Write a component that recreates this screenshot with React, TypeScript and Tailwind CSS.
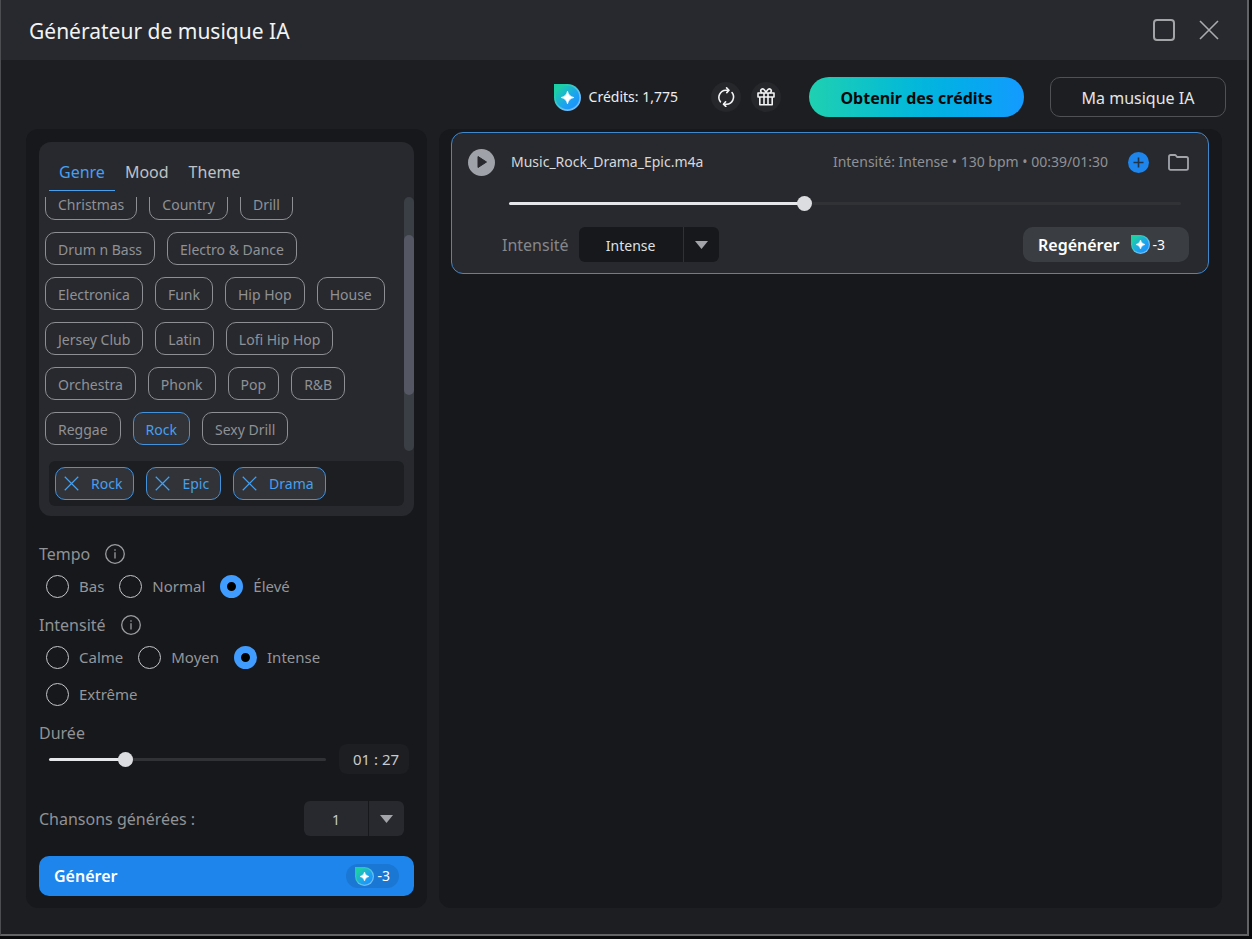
import { useState } from "react";
import type { ReactNode } from "react";

const genres = [
  "Christmas", "Country", "Drill", "Drum n Bass", "Electro & Dance", "Electronica",
  "Funk", "Hip Hop", "House", "Jersey Club", "Latin", "Lofi Hip Hop", "Orchestra",
  "Phonk", "Pop", "R&B", "Reggae", "Rock", "Sexy Drill",
];

const tabs = ["Genre", "Mood", "Theme"];
const tempos = ["Bas", "Normal", "Élevé"];
const intensities = ["Calme", "Moyen", "Intense", "Extrême"];

function CreditIcon({ className }: { className: string }) {
  return (
    <svg className={className} viewBox="0 0 27 27" aria-hidden="true">
      <defs>
        <linearGradient id="credit" x1="0" y1="0" x2="1" y2="1">
          <stop offset="0.1" stopColor="#1ccfa6" />
          <stop offset="0.6" stopColor="#1ba2f2" />
          <stop offset="1" stopColor="#1b8cff" />
        </linearGradient>
        <linearGradient id="creditRing" x1="0" y1="0" x2="1" y2="1">
          <stop offset="0.2" stopColor="#1ccfa6" />
          <stop offset="0.7" stopColor="#6fbcf8" />
        </linearGradient>
      </defs>
      <path d="M0 0H13.5A13.5 13.5 0 1 1 0 13.5Z" fill="url(#creditRing)" />
      <circle cx="13.5" cy="13.5" r="11.8" fill="url(#credit)" />
      <path d="M13.5 7.2Q14.6 12.4 19.8 13.5Q14.6 14.6 13.5 19.8Q12.4 14.6 7.2 13.5Q12.4 12.4 13.5 7.2Z" fill="#fff" stroke="#fff" strokeWidth="0.8" strokeLinejoin="round" />
    </svg>
  );
}

function InfoIcon() {
  return (
    <svg className="size-5" viewBox="0 0 20 20" fill="none" stroke="#9b9da1" strokeWidth="1.3" aria-hidden="true">
      <circle cx="10" cy="10" r="9.3" />
      <path d="M10 8.3V14.5" />
      <path d="M10 5.2V6.7" />
    </svg>
  );
}

function RefreshIcon() {
  return (
    <svg className="size-5" viewBox="0 0 20 20" fill="none" stroke="#f2f3f4" strokeWidth="1.6" strokeLinecap="round" strokeLinejoin="round" aria-hidden="true">
      <path d="M4.4 14.8A7.2 7.2 0 0 1 9.8 3.2H12.6" />
      <path d="M10.6 0.9L12.9 3.2L10.8 5.6" />
      <path d="M16 5.6A7.2 7.2 0 0 1 10.6 17.2H7.8" />
      <path d="M9.6 14.8L7.5 17.2L9.8 19.4" />
    </svg>
  );
}

function GiftIcon() {
  return (
    <svg className="size-5" viewBox="0 0 20 20" fill="none" stroke="#f2f3f4" strokeWidth="1.6" strokeLinejoin="round" aria-hidden="true">
      <path d="M2 6H18V10H2Z" />
      <path d="M3.8 10V17.8H16.2V10" />
      <path d="M8 6V17.8M12 6V17.8" />
      <path d="M10 5.8C8.8 2.2 7 1.4 5.6 2.2C4 3.2 4.6 5.4 6.4 5.9M10 5.8C11.2 2.2 13 1.4 14.4 2.2C16 3.2 15.4 5.4 13.6 5.9" />
    </svg>
  );
}

function CrossIcon({ className }: { className: string }) {
  return (
    <svg className={className} viewBox="0 0 20 20" fill="none" stroke="currentColor" strokeWidth="1.6" aria-hidden="true">
      <path d="M1 1L19 19M19 1L1 19" />
    </svg>
  );
}

function Slider({ label, value, max, onChange }: { label: string; value: number; max: number; onChange: (v: number) => void }) {
  const pct = (value / max) * 100;
  return (
    <input
      type="range"
      aria-label={label}
      min={0}
      max={max}
      step={0.5}
      value={value}
      onChange={(e) => onChange(Number(e.target.value))}
      className="h-[3px] w-full min-w-0 flex-1 cursor-pointer appearance-none rounded-sm [&::-webkit-slider-thumb]:size-[15px] [&::-webkit-slider-thumb]:appearance-none [&::-webkit-slider-thumb]:rounded-full [&::-webkit-slider-thumb]:bg-[#dcdde1]"
      style={{ background: `linear-gradient(to right, #e6e7ea ${pct}%, #313236 ${pct}%)` }}
    />
  );
}

function Dropdown({ id, options, value, onChange, dark }: { id: string; options: string[]; value: string; onChange: (v: string) => void; dark?: boolean }) {
  return (
    <div className={dark ? "relative w-[140px]" : "relative w-[100px]"}>
      <select
        id={id}
        value={value}
        onChange={(e) => onChange(e.target.value)}
        className={`h-[35px] w-full appearance-none rounded-md pt-0.5 pr-9 text-center text-sm [text-align-last:center] ${dark ? "bg-[#17181b] text-[#dfe1e3]" : "bg-[#28292e] text-[#c9cbce]"}`}
      >
        {options.map((o) => (
          <option key={o}>{o}</option>
        ))}
      </select>
      <span className={`pointer-events-none absolute inset-y-0 right-0 flex w-9 items-center justify-center border-l ${dark ? "border-[#303136]" : "border-[#17181b]"}`}>
        <svg className="h-2 w-[13px]" viewBox="0 0 13 8" fill="#a2a4aa" aria-hidden="true">
          <path d="M0 0H13L6.5 8Z" />
        </svg>
      </span>
    </div>
  );
}

function RadioGroup({ name, options, value, onChange }: { name: string; options: string[]; value: string; onChange: (v: string) => void }) {
  return (
    <div role="radiogroup" aria-label={name} className="mt-[9px] flex flex-wrap gap-x-[15px] gap-y-[14px] pl-[7px]">
      {options.map((o) => (
        <label key={o} className="flex h-[23px] items-center gap-[10px] text-[15px] text-[#94969a]">
          <input
            type="radio"
            name={name}
            checked={value === o}
            onChange={() => onChange(o)}
            className="size-[23px] appearance-none rounded-full border border-[#c4c6c9] checked:border-[7px] checked:border-[#409cff] checked:bg-black"
          />
          {o}
        </label>
      ))}
    </div>
  );
}

function SectionLabel({ children }: { children: ReactNode }) {
  return (
    <div className="flex h-6 items-center gap-[15px] text-base text-[#909296]">
      {children}
      <button type="button" aria-label="Info">
        <InfoIcon />
      </button>
    </div>
  );
}

function TagPicker() {
  const [tab, setTab] = useState("Genre");
  const [tags, setTags] = useState(["Rock", "Epic", "Drama"]);

  const toggle = (tag: string) =>
    setTags((prev) => (prev.includes(tag) ? prev.filter((x) => x !== tag) : [...prev, tag]));

  return (
    <section className="rounded-xl bg-[#28292e] pt-3">
      <div role="tablist" className="flex pl-[10px]">
        {tabs.map((name) => (
          <button
            key={name}
            type="button"
            role="tab"
            aria-selected={tab === name}
            onClick={() => setTab(name)}
            className={`h-[37px] border-b px-[10px] text-base ${tab === name ? "border-[#479fee] text-[#479fee]" : "border-transparent text-[#bfc1c5]"}`}
          >
            {name}
          </button>
        ))}
      </div>
      <div className="mt-[6px] flex h-[254px] justify-between overflow-hidden pl-[6px]">
        <div className="flex flex-1 flex-wrap content-end gap-3 pb-[6px]">
          {genres.map((g) => (
            <button
              key={g}
              type="button"
              aria-pressed={tags.includes(g)}
              onClick={() => toggle(g)}
              className={`h-[33px] rounded-[10px] border px-3 pt-0.5 text-sm ${tags.includes(g) ? "border-[#4592dc] bg-[#313338] text-[#479fee]" : "border-[#8d8f94] text-[#8f9195]"}`}
            >
              {g}
            </button>
          ))}
        </div>
        <div className="flex w-[10px] flex-col rounded-full bg-[#393f44] pt-[38px]">
          <div className="h-[160px] rounded-full bg-[#555764]" />
        </div>
      </div>
      <div className="px-[10px] pt-[10px] pb-[10px]">
        <div className="flex min-h-[45px] flex-wrap items-center gap-3 rounded-md bg-[#1d1e21] px-[6px] py-[6px]">
          {tags.map((tag) => (
            <button
              key={tag}
              type="button"
              onClick={() => toggle(tag)}
              className="flex h-[33px] items-center gap-3 rounded-[10px] border border-[#4592dc] bg-[#313338] pr-[11px] pl-2 text-sm text-[#479fee]"
            >
              <CrossIcon className="size-[15px]" />
              {tag}
            </button>
          ))}
        </div>
      </div>
    </section>
  );
}

function Sidebar() {
  const [tempo, setTempo] = useState("Élevé");
  const [intensity, setIntensity] = useState("Intense");
  const [duration, setDuration] = useState(87);
  const [songs, setSongs] = useState("1");
  const mm = String(Math.floor(duration / 60)).padStart(2, "0");
  const ss = String(Math.floor(duration % 60)).padStart(2, "0");

  return (
    <aside className="w-[401px] shrink-0 rounded-xl bg-[#17181b] px-[13px] pt-[13px] pb-3">
      <TagPicker />
      <div className="mt-[26px]">
        <SectionLabel>Tempo</SectionLabel>
        <RadioGroup name="Tempo" options={tempos} value={tempo} onChange={setTempo} />
      </div>
      <div className="mt-[15px]">
        <SectionLabel>Intensité</SectionLabel>
        <RadioGroup name="Intensité" options={intensities} value={intensity} onChange={setIntensity} />
      </div>
      <div className="mt-4 h-[22px] text-base leading-[22px] text-[#909296]">Durée</div>
      <div className="flex items-center gap-[13px] pr-[5px] pl-[10px]">
        <Slider label="Durée" value={duration} max={330} onChange={setDuration} />
        <input
          type="text"
          readOnly
          aria-label="Durée choisie"
          value={`${mm} : ${ss}`}
          className="h-[30px] w-[70px] rounded-lg bg-[#1d1e21] pl-1 text-center text-[15px] text-[#c9cbce]"
        />
      </div>
      <div className="mt-[27px] flex items-center justify-between pr-[10px]">
        <label htmlFor="songs" className="text-base text-[#909296]">Chansons générées :</label>
        <Dropdown id="songs" options={["1", "2", "3", "4"]} value={songs} onChange={setSongs} />
      </div>
      <button type="button" className="mt-5 flex h-10 w-full items-center justify-between rounded-[10px] bg-[#1d85ec] px-[15px] text-base font-semibold text-white">
        Générer
        <span className="flex h-6 items-center gap-[3px] rounded-full bg-[#1b77d4] px-[9px] text-sm font-normal">
          <CreditIcon className="size-[19px]" />
          -3
        </span>
      </button>
    </aside>
  );
}

function TrackCard() {
  const [position, setPosition] = useState(39.5);
  const [intensity, setIntensity] = useState("Intense");

  return (
    <article className="rounded-xl border border-[#4187cc] bg-[#28292e] pt-[15px] pr-[19px] pb-[11px] pl-4">
      <div className="flex h-7 items-center">
        <button type="button" aria-label="Lecture" className="flex size-[27px] items-center justify-center rounded-full bg-[#a0a2aa]">
          <svg className="h-3 w-[10px]" viewBox="0 0 10 12" fill="#28292e" aria-hidden="true">
            <path d="M1 0.5L9.5 6L1 11.5Z" stroke="#28292e" strokeLinejoin="round" />
          </svg>
        </button>
        <span className="ml-4 text-sm text-[#d6d8da]">Music_Rock_Drama_Epic.m4a</span>
        <span className="ml-auto text-sm text-[#8f9195]">Intensité: Intense • 130 bpm • 00:39/01:30</span>
        <button type="button" aria-label="Ajouter" className="ml-5">
          <svg className="size-[21px]" viewBox="0 0 21 21" fill="none" aria-hidden="true">
            <circle cx="10.5" cy="10.5" r="10.5" fill="#1d85ec" />
            <path d="M10.5 5.5V15.5M5.5 10.5H15.5" stroke="#20344c" strokeWidth="1.6" />
          </svg>
        </button>
        <button type="button" aria-label="Ouvrir le dossier" className="ml-[19px]">
          <svg className="h-[17px] w-[21px]" viewBox="0 0 21 17" fill="none" stroke="#a2a4aa" strokeWidth="1.8" strokeLinejoin="round" aria-hidden="true">
            <path d="M1 14.2V2.6Q1 1 2.6 1H6.8Q7.6 1 8.1 1.7L9 3H18.4Q20 3 20 4.6V14.2Q20 15.8 18.4 15.8H2.6Q1 15.8 1 14.2Z" />
          </svg>
        </button>
      </div>
      <div className="flex h-[51px] items-center pt-3 pr-2 pl-[41px] pb-2">
        <Slider label="Position" value={position} max={90} onChange={setPosition} />
      </div>
      <div className="flex items-center pl-[34px]">
        <label htmlFor="intensity" className="mr-[10px] text-base text-[#85878b]">Intensité</label>
        <Dropdown id="intensity" options={intensities} value={intensity} onChange={setIntensity} dark />
        <button type="button" className="ml-auto flex h-[35px] w-[166px] items-center rounded-[10px] bg-[#3a3e43] pl-[15px] text-base font-semibold text-white">
          Regénérer
          <span className="ml-[11px] flex items-center gap-[3px] text-sm font-normal">
            <CreditIcon className="size-[19px]" />
            -3
          </span>
        </button>
      </div>
    </article>
  );
}

export default function App() {
  return (
    <div className="flex min-h-screen flex-col bg-[#08090a] pr-[3px] pb-[3px] font-['Noto_Sans','Segoe_UI',sans-serif]">
      <main className="flex flex-1 flex-col border-r-2 border-b-2 border-l border-r-[#626365] border-b-[#626365] border-l-[#4c4d50] bg-[#1d1e22]">
        <header className="flex h-[60px] items-center justify-between bg-[#28292e] pr-7 pl-7">
          <h1 className="pt-1 text-[21px] text-[#f1f3f4]">Générateur de musique IA</h1>
          <div className="flex items-center gap-6 text-[#a9abae]">
            <button type="button" aria-label="Agrandir" className="size-[22px] rounded-[4px] border-2 border-[#a3a4a7]" />
            <button type="button" aria-label="Fermer">
              <CrossIcon className="size-5" />
            </button>
          </div>
        </header>

        <div className="flex items-center justify-end pt-[17px] pr-[21px] pb-3">
          <CreditIcon className="size-[27px]" />
          <span className="ml-2 text-sm text-[#eceeef]">Crédits: 1,775</span>
          <button type="button" aria-label="Actualiser" className="ml-[33px] flex size-[30px] items-center justify-center rounded-full bg-[#26272b]">
            <RefreshIcon />
          </button>
          <button type="button" aria-label="Cadeau" className="ml-[10px] flex size-[30px] items-center justify-center rounded-full bg-[#26272b]">
            <GiftIcon />
          </button>
          <button type="button" className="ml-7 h-10 w-[215px] rounded-full bg-linear-to-r from-[#1fd0b0] to-[#149aff] pt-0.5 text-base font-bold text-[#06090c]">
            Obtenir des crédits
          </button>
          <button type="button" className="ml-[26px] h-10 w-[176px] rounded-[10px] border border-[#505155] pt-0.5 text-base text-[#e4e6e8]">
            Ma musique IA
          </button>
        </div>

        <div className="flex flex-1 gap-3 pr-[25px] pb-[26px] pl-[25px]">
          <Sidebar />
          <section className="min-w-0 flex-1 rounded-xl bg-[#17181b] pt-[3px] pr-[13px] pb-3 pl-3">
            <TrackCard />
          </section>
        </div>
      </main>
    </div>
  );
}
